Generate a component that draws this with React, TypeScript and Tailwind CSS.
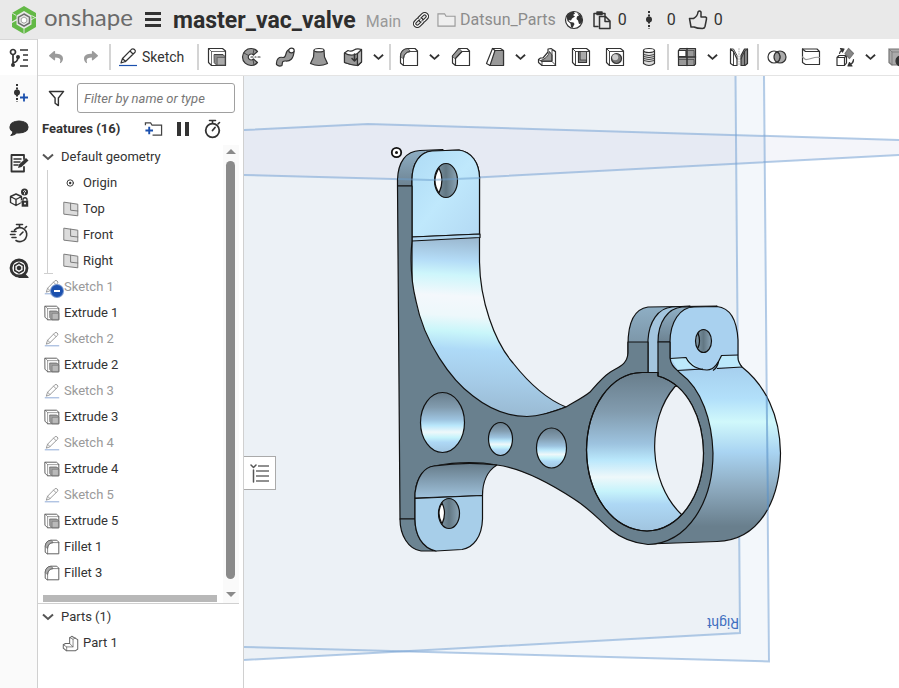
import React from 'react';
import { FaReply, FaShare } from 'react-icons/fa';

type IconProps = { className?: string };

function Svg({ className = 'w-5 h-5', children }: { className?: string; children: React.ReactNode }) {
  return (
    <svg
      viewBox="0 0 20 20"
      className={`shrink-0 ${className}`}
      fill="none"
      stroke="currentColor"
      strokeWidth="1.2"
      strokeLinejoin="round"
      strokeLinecap="round"
      aria-hidden="true"
    >
      {children}
    </svg>
  );
}

/* ---------- Modelling icons ---------- */

const PencilIcon = ({ className }: IconProps) => (
  <Svg className={className}>
    <path d="M3 16 4.5 11.5 13.5 2.3Q15 1.2 16.5 2.5T17 5.3L7.5 14.5Z M4.5 11.5 7.5 14.5 M12 4 15 7" />
    <path d="M1 18.5H19" stroke="#1b50ae" strokeLinecap="butt" />
  </Svg>
);

const ExtrudeIcon = ({ className }: IconProps) => (
  <Svg className={className}>
    <path d="M1.5 1.5H15.5L18.5 4V18.5H4.5L1.5 15.5Z" fill="#fff" />
    <path d="M1.5 1.5 4.5 4.5V18.5M4.5 4.5H18.5" strokeWidth="0.7" />
    <path d="M7.5 7.5H16L18.5 10V18.5H10L7.5 16Z" fill="#8a8a8a" strokeWidth="0.9" />
    <path d="M10.5 10.5H18V18H10.5Z" fill="#aaa" stroke="#555" strokeWidth="0.7" />
  </Svg>
);

const RevolveIcon = () => (
  <Svg>
    <path d="M16.5 4.500A8.500 8.500 0 1 0 16.500 15.500L12.500 12A3 3 0 1 1 12.500 8Z" fill="#999" />
    <path d="M12 7.500 13 2M12 12.500 13 18M7.500 8.500 3 6" strokeWidth="0.8" />
    <path d="M10 10H12M14 10H15M17 10H19" />
  </Svg>
);

const SweepIcon = () => (
  <Svg>
    <path d="M1.500 17.500C1 12 4 9.500 8 10.500C12 11 9.500 4 14 2.500L19 4.500C18.500 12 15 14.500 10.500 14C7 13.800 7.500 15.500 7 18.500Q4 20 1.500 17.500Z" fill="#999" />
    <ellipse cx="16.500" cy="3.500" rx="2.700" ry="2.400" fill="#fff" />
  </Svg>
);

const LoftIcon = () => (
  <Svg>
    <path d="M5 3.500 4.500 10 1.500 16.500Q10 20.500 18.500 16.500L15.500 10 15 3.500Z" fill="#999" />
    <ellipse cx="10" cy="3.200" rx="5" ry="1.700" fill="#fff" />
  </Svg>
);

const ThickenIcon = () => (
  <Svg>
    <path d="M1.500 6 5 3.500Q8 5 11 3T18.500 2.500V15L15 18.500Q8 18 1.500 15.500Z" fill="#fff" />
    <path d="M1.500 6Q8 10 14.500 6.500V18.500Q8 18 1.500 15.500Z" fill="#999" />
    <path d="M14.500 6.500 18.500 2.500V15L14.500 18.500Z" fill="#bbb" />
    <path d="M11.500 7V14M9 11.500 11.500 14 14 11.500" strokeWidth="1.600" />
  </Svg>
);

const FilletIcon = ({ className }: IconProps) => (
  <Svg className={className}>
    <path d="M1.500 16V9Q2 2 9 1.500H16L18.500 4V18.500H4.500Z" fill="#fff" />
    <path d="M1.500 9Q2 2 9 1.500L11.500 4.500Q5 5 4.500 11.500Z" fill="#999" strokeWidth="0.8" />
    <path d="M4.500 18.500V11.500Q5 5 11.500 4.500H18.500" strokeWidth="0.9" />
  </Svg>
);

const ChamferIcon = () => (
  <Svg>
    <path d="M1.500 16V9L8 1.500H16L18.500 4V18.500H4.500Z" fill="#fff" />
    <path d="M1.500 9 8 1.500 11 4.500 4.500 11.500Z" fill="#999" strokeWidth="0.8" />
    <path d="M4.500 18.500V11.500L11 4.500H18.500" />
  </Svg>
);

const DraftIcon = () => (
  <Svg>
    <path d="M1.500 16.500 7.500 1.500H15.500L18.500 3.500V18.500H5Z" fill="#fff" />
    <path d="M5 18.500 10 3.500H18.500V18.500Z" fill="#999" />
    <path d="M7.500 1.500 10 3.500" />
  </Svg>
);

const RibIcon = () => (
  <Svg>
    <path d="M1.500 12.500 3.500 11H6L11 5V2L14 1.500 18.500 4.500V18.500H5L1.500 15.500Z" fill="#fff" />
    <path d="M4 13.500Q11 11 12.500 4.500L15 8V14H5Z" fill="#999" strokeWidth="0.9" />
    <path d="M1.500 12.500 5 14.500V18.500M5 14.500H15V3L18.500 4.500M15 14.500 18.500 18" strokeWidth="0.900" />
  </Svg>
);

const ShellIcon = () => (
  <Svg>
    <path d="M1.500 1.500H15.500L18.500 4V18.500H4.500L1.500 15.500Z" fill="#fff" />
    <path d="M4.500 18.500V4.500L1.500 1.500M4.500 4.500H18.500" strokeWidth="0.900" />
    <path d="M7.500 4.500H15.500V15.500H7.500Z" fill="#888" />
    <path d="M9.500 4.500H15.500V13H9.500Z" fill="#aaa" strokeWidth="0.700" />
  </Svg>
);

const HoleIcon = () => (
  <Svg>
    <path d="M1.500 1.500H15.500L18.500 4V18.500H4.500L1.500 15.500Z" fill="#fff" />
    <path d="M1.500 1.500 4.500 4.500V18.500M4.500 4.500H18.500" strokeWidth="0.900" />
    <circle cx="11.500" cy="11.500" r="5" fill="#777" />
    <circle cx="10.200" cy="10.200" r="3" fill="#ccc" stroke="none" />
  </Svg>
);

const ThreadIcon = () => (
  <Svg>
    <path d="M4.500 3.500V16.500Q10 20.500 15.500 16.500V3.500Z" fill="#ddd" />
    <ellipse cx="10" cy="3.500" rx="5.500" ry="2" fill="#fff" />
    <path d="M4.500 7.500Q10 10 15.500 7.500M4.500 9.500Q10 12 15.500 9.500M4.500 11.500Q10 14 15.500 11.500M4.500 13.500Q10 16 15.500 13.500" strokeWidth="0.900" />
  </Svg>
);

const PatternIcon = () => (
  <Svg>
    <path d="M1.500 3.500 3 1.500H18.500V17L17 18.500H1.500Z" fill="#999" />
    <path d="M1.500 3.500H9V9.500H1.500Z" fill="#fff" />
    <path d="M10 1.500V18.500M1.500 10H18.500" strokeWidth="1.500" />
    <path d="M1.500 12.500H17V18.500M11 3.500H17V9.500" strokeWidth="0.600" />
  </Svg>
);

const MirrorIcon = () => (
  <Svg>
    <path d="M1.500 2 4.500 4.500 8 12V18.500H4.500L1.500 16.500Z" fill="#fff" />
    <path d="M1.500 2H4.500L8 8.500V12M4.500 4.500V18.500" strokeWidth="0.900" />
    <path d="M18.500 2H15.500L12 8.500V18.500H16L18.500 16.500Z" fill="#888" />
    <path d="M18.500 2 15.500 4.500V18.500M15.500 4.500 12 12" strokeWidth="0.900" />
    <path d="M10 1.500V18.500" stroke="#bbb" strokeDasharray="1 1.500" />
  </Svg>
);

const BooleanIcon = () => (
  <Svg>
    <circle cx="13" cy="10" r="6" fill="#aaa" />
    <circle cx="7" cy="10" r="6" fill="#fff" />
    <path d="M10 4.800A6 6 0 0 1 10 15.200A6 6 0 0 1 10 4.800Z" fill="#999" />
  </Svg>
);

const SplitIcon = () => (
  <Svg>
    <path d="M1.500 2H16L18.500 4.500V17.500H4.500L1.500 15.500Z" fill="#fff" />
    <path d="M1.500 2 4.500 4.500H18.500" />
    <path d="M1.500 10 4.500 12.500C8 13 14 9 18.500 10.500" stroke="#999" />
  </Svg>
);

const TransformIcon = () => (
  <Svg>
    <path d="M2 10.500 4 8.500H11.500V16L9.500 18.500H2ZM2 10.500H9.500V18.500M9.500 10.500 11.500 8.500" fill="#fff" />
    <path d="M13.500 1.500 18.500 6.500 14.500 11.500 10 6.500Z" fill="#888" stroke="#777" />
    <path d="M4.500 6.500Q5 4 7 3M5.500 1.500 9 2 7.500 5ZM18.500 12.500Q18.500 16 16 17M17 19H13L14.500 15.500Z" fill="currentColor" />
  </Svg>
);

const DeletePartIcon = () => (
  <Svg>
    <path d="M2 2H18V18H5L2 15.500Z" fill="#aaa" stroke="#777" />
    <path d="M2 2 5 5H18M5 5V18" stroke="#777" strokeWidth="0.800" />
    <circle cx="14" cy="14" r="5" fill="#333" />
  </Svg>
);

const PlaneIcon = ({ className }: IconProps) => (
  <Svg className={className}>
    <path d="M1.500 1.500 18.500 4V18.500L1.500 16.500Z" fill="#dcdcdc" />
    <path d="M9.500 2.800V11.500L18.500 12.500" />
  </Svg>
);

const PartIcon = ({ className }: IconProps) => (
  <Svg className={className}>
    <path d="M1.500 11.500 4 10H9V3.500L11.500 1.500 18.500 5.500V16.500L16 18.500H5L1.500 15.500Z" fill="#fff" />
    <path d="M1.500 11.500 5.500 14V18.500M5.500 14H13V5L9 3M13 5 15.500 3.500M13 14 9 10" strokeWidth="0.900" />
  </Svg>
);

const ChevronIcon = ({ className = 'w-3 h-3' }: IconProps) => (
  <svg viewBox="0 0 12 12" className={className} fill="none" stroke="currentColor" strokeWidth="2" aria-hidden="true">
    <path d="M1 3.500 6 8 11 3.500" />
  </svg>
);

/* ---------- Document and rail icons ---------- */

const LogoIcon = () => (
  <svg viewBox="0 0 24 28" className="w-6 h-7" aria-hidden="true">
    <path d="M12 0 24 7V11L19.500 13V9.500L12 5 4.500 9.500V13L0 15.500V7Z" fill="#63b946" />
    <path d="M0 17 4.500 14.500V18.500L12 23 19.500 18.500V14L24 11.500V21L12 28 0 21Z" fill="#63b946" />
    <path d="M4 9.300 0 7M19.500 9.500 24 12M12 23V28" stroke="#e9e9e9" strokeWidth="0.900" fill="none" />
    <path d="M12 8 17.500 11.200V17L12 20.200 6.500 17V11.200Z" fill="none" stroke="#6d6d6d" strokeWidth="1.500" />
    <path d="M12 11 14.800 12.600V15.700L12 17.300 9.200 15.700V12.600Z" fill="#fff" stroke="#888" strokeWidth="0.800" />
  </svg>
);

const LinkIcon = () => (
  <Svg className="w-4 h-4">
    <g transform="rotate(-45 10 10)" strokeWidth="4.400">
      <path d="M9.500 13.300H3.500A3.300 3.300 0 0 1 3.500 6.700H7.500Q10.500 7 11 10" />
      <path d="M10.500 6.700H16.500A3.300 3.300 0 0 1 16.500 13.300H12.500Q9.500 13 9 10" />
      <g stroke="#fff" strokeWidth="1.500">
        <path d="M9.500 13.300H3.500A3.300 3.300 0 0 1 3.500 6.700H7.500Q10.500 7 11 10" />
        <path d="M10.500 6.700H16.500A3.300 3.300 0 0 1 16.500 13.300H12.500Q9.500 13 9 10" />
      </g>
    </g>
  </Svg>
);

const FolderIcon = () => (
  <svg viewBox="0 0 20 16" className="w-[19px] h-4" fill="#efefef" stroke="#9a9a9a" strokeWidth="1.200" aria-hidden="true">
    <path d="M1 14.500V1.500H8L9.500 4H19V14.500Z" />
  </svg>
);

const GlobeIcon = () => (
  <Svg>
    <circle cx="10" cy="10" r="8.500" fill="#fff" />
    <path d="M2.500 6.500Q5 2 9.500 1.500L11 3.500 9 5 11 6.500 8 8.500 7 10.500 4.500 10 6 12 9.500 12.500 10.500 14 8.500 18 7 17 6.500 13.500 3.500 11Z" fill="currentColor" stroke="none" />
    <path d="M13 3 17 5.500 18.500 10 17.500 13.500 15 14 14 10.500 12.500 9 13 6.500 15 5.500Z" fill="currentColor" stroke="none" />
  </Svg>
);

const CopyIcon = () => (
  <Svg>
    <g strokeWidth="1.500">
      <path d="M6 16.500H2V3.500H4.500M10 3.500H13V5.500" />
      <path d="M5 2H10V4.500H5Z" fill="currentColor" />
      <path d="M7.500 6.500H13.500L18 11V18.500H7.500ZM13 6.500V11.500H18" />
    </g>
  </Svg>
);

const VersionIcon = ({ plus }: { plus?: boolean }) => (
  <Svg>
    <path d="M8 1V19" strokeWidth="2" strokeDasharray="2 1.500" strokeLinecap="butt" />
    <circle cx="8" cy="9.500" r="3" fill="currentColor" stroke="none" />
    {plus && <path d="M15 10.500V18.500M11 14.500H19" stroke="#1b50ae" strokeWidth="1.800" strokeLinecap="butt" />}
  </Svg>
);

const ThumbIcon = () => (
  <Svg>
    <path
      d="M1.500 8.500H5.500Q9.500 6.500 10 2Q11.500 0 13 2V7H17.500Q19 7.500 18.500 9L17 16.500Q16.500 18.500 14.500 18.500Q9 18.500 6 17H3Z"
      strokeWidth="1.500"
    />
  </Svg>
);

const FeatureTreeIcon = () => (
  <Svg>
    <g strokeWidth="1.700">
      <circle cx="4" cy="4" r="2.500" />
      <path d="M4 6.500V18M4 14.500Q8.500 14.500 9 9.500M11 2H19M14 7H19M14 12H19M11 18H19" strokeLinecap="butt" />
    </g>
    <circle cx="4" cy="17" r="2" fill="currentColor" stroke="none" />
    <circle cx="9" cy="9" r="2" fill="currentColor" stroke="none" />
  </Svg>
);

const CommentIcon = () => (
  <Svg>
    <path d="M10 3C15.500 3 19 5.500 19 9S15.500 15 10 15Q8.500 15 7.500 14.800 5 17.500 2 17.500 4 16 4 13.500 1 12 1 9C1 5.500 4.500 3 10 3Z" fill="currentColor" />
  </Svg>
);

const NotesIcon = () => (
  <Svg>
    <path d="M15 6V2H2.500V18.500H15V14" strokeWidth="1.800" />
    <path d="M5 6H12M5 9H11M5 12H9" strokeWidth="1.500" />
    <path d="M9 15 10 11.500 17 5 19.500 7.500 12.500 14Z" fill="currentColor" stroke="none" />
  </Svg>
);

const PartLockIcon = () => (
  <Svg>
    <path d="M7 6 12.500 8.500V14.500L7 17.500 1.500 14.500V8.500ZM1.500 8.500 7 11.500 12.500 8.500M7 11.500V17.500" strokeWidth="1.400" />
    <circle cx="15.500" cy="4" r="3.500" fill="currentColor" stroke="none" />
    <path d="M14.300 3.500Q15.500 1.500 16.700 3.200 16.500 4.200 15.500 4.700V6" stroke="#fff" strokeWidth="0.900" />
    <path d="M12.500 12.500H19.500V19H12.500Z" fill="currentColor" stroke="#fafafa" strokeWidth="0.600" />
    <path d="M14 12.500V11Q16 8.500 18 11V12.500" strokeWidth="1.300" />
    <circle cx="16" cy="15.500" r="1" fill="#fff" stroke="none" />
  </Svg>
);

const TimerIcon = ({ lines }: { lines?: boolean }) => (
  <Svg>
    <path d="M7.500 1.500H13.500M10.500 1.500V4M16 5 17.500 3.500" strokeWidth="1.600" />
    {lines ? (
      <path d="M5.500 7A7 7 0 1 1 7 17.500M2.500 8.500H7M1.500 11.500H6M3 14.500H7M11 12 14 9" strokeWidth="1.600" />
    ) : (
      <>
        <circle cx="10.500" cy="11.500" r="6.800" strokeWidth="1.800" />
        <path d="M10.500 11.500 13 8.500" strokeWidth="1.800" />
      </>
    )}
  </Svg>
);

const LearnIcon = () => (
  <Svg>
    <path d="M16 16.500 19 19.500H10" fill="currentColor" />
    <circle cx="10" cy="10" r="8" strokeWidth="2.800" fill="#fff" />
    <path d="M10 5 14.300 7.500V12.500L10 15 5.700 12.500V7.500Z" strokeWidth="1.500" />
    <path d="M10 7.500 12.200 8.800V11.300L10 12.500 7.800 11.300V8.800Z" fill="currentColor" stroke="none" />
  </Svg>
);

/* ---------- Data ---------- */

type Tool = { name: string; icon: React.ComponentType; menu?: boolean; end?: boolean };

const tools: Tool[] = [
  { name: 'Extrude', icon: ExtrudeIcon },
  { name: 'Revolve', icon: RevolveIcon },
  { name: 'Sweep', icon: SweepIcon },
  { name: 'Loft', icon: LoftIcon },
  { name: 'Thicken', icon: ThickenIcon, menu: true, end: true },
  { name: 'Fillet', icon: FilletIcon, menu: true },
  { name: 'Chamfer', icon: ChamferIcon },
  { name: 'Draft', icon: DraftIcon, menu: true },
  { name: 'Rib', icon: RibIcon },
  { name: 'Shell', icon: ShellIcon },
  { name: 'Hole', icon: HoleIcon },
  { name: 'Thread', icon: ThreadIcon, end: true },
  { name: 'Pattern', icon: PatternIcon, menu: true },
  { name: 'Mirror', icon: MirrorIcon, end: true },
  { name: 'Boolean', icon: BooleanIcon },
  { name: 'Split', icon: SplitIcon },
  { name: 'Transform', icon: TransformIcon, menu: true },
  { name: 'Delete part', icon: DeletePartIcon },
];

const features = [
  { name: 'Sketch 1', type: 'sketch', flagged: true },
  { name: 'Extrude 1', type: 'extrude' },
  { name: 'Sketch 2', type: 'sketch' },
  { name: 'Extrude 2', type: 'extrude' },
  { name: 'Sketch 3', type: 'sketch' },
  { name: 'Extrude 3', type: 'extrude' },
  { name: 'Sketch 4', type: 'sketch' },
  { name: 'Extrude 4', type: 'extrude' },
  { name: 'Sketch 5', type: 'sketch' },
  { name: 'Extrude 5', type: 'extrude' },
  { name: 'Fillet 1', type: 'fillet' },
  { name: 'Fillet 3', type: 'fillet' },
];

const railItems = [
  { name: 'Versions', icon: <VersionIcon plus /> },
  { name: 'Comments', icon: <CommentIcon /> },
  { name: 'Notes', icon: <NotesIcon /> },
  { name: 'Part properties', icon: <PartLockIcon /> },
  { name: 'Performance', icon: <TimerIcon lines /> },
  { name: 'Learning', icon: <LearnIcon /> },
];

const Separator = () => <div className="w-0.5 h-[26px] mx-px shrink-0 bg-[#d4d4d4]" />;

/* ---------- Header ---------- */

function Header() {
  return (
    <header className="flex items-center h-[39px] shrink-0 pl-3 bg-[#e9e9e9] whitespace-nowrap overflow-hidden">
      <a href="#home" aria-label="onshape" className="flex items-center gap-2 w-[133px] shrink-0">
        <LogoIcon />
        <span className="font-[Lato,sans-serif] text-[24px] leading-7 text-[#6b6b6b] pb-1.5">onshape</span>
      </a>
      <button aria-label="Main menu" className="flex flex-col justify-between w-4 h-[15px] shrink-0">
        <span className="w-full h-[3px] bg-[#333]" />
        <span className="w-full h-[3px] bg-[#333]" />
        <span className="w-full h-[3px] bg-[#333]" />
      </button>
      <h1 className="ml-3 pt-0.5 text-[23px] leading-7 font-bold text-[#2e2e2e]">master_vac_valve</h1>
      <span className="ml-2.5 pt-1 text-base text-[#999]">Main</span>
      <button aria-label="Copy link" className="ml-3"><LinkIcon /></button>
      <a href="#folder" className="flex items-center gap-1 ml-2 text-base text-[#8c8c8c]">
        <FolderIcon />
        Datsun_Parts
      </a>
      <button aria-label="Public document" className="ml-2"><GlobeIcon /></button>
      <button aria-label="Copies" className="flex items-center gap-1.5 ml-2 text-base"><CopyIcon />0</button>
      <button aria-label="Versions" className="flex items-center gap-1.5 ml-3.5 text-base"><VersionIcon />0</button>
      <button aria-label="Likes" className="flex items-center gap-1.5 ml-3 text-base"><ThumbIcon />0</button>
    </header>
  );
}

function Toolbar() {
  return (
    <div role="toolbar" aria-label="Features" className="flex items-center h-[37px] shrink-0 overflow-hidden border-b border-[#e4e4e4] bg-white">
      <button aria-label="Undo" className="flex justify-center w-[35px] shrink-0 text-[#9b9b9b]"><FaReply size={14} /></button>
      <button aria-label="Redo" className="flex justify-center w-[35px] shrink-0 text-[#9b9b9b]"><FaShare size={14} /></button>
      <Separator />
      <button className="flex items-center gap-1 w-[84px] shrink-0 pl-1.5 text-sm">
        <PencilIcon />
        Sketch
      </button>
      <Separator />
      {tools.map(({ name, icon: Icon, menu, end }) => (
        <React.Fragment key={name}>
          <button aria-label={name} className="flex justify-center w-[34px] shrink-0"><Icon /></button>
          {menu && (
            <button aria-label={`${name} menu`} className="flex justify-center w-[18px] shrink-0 pr-0.5">
              <ChevronIcon className="w-[11px] h-3" />
            </button>
          )}
          {end && <Separator />}
        </React.Fragment>
      ))}
    </div>
  );
}

/* ---------- Feature panel ---------- */

function FeatureIcon({ type }: { type: string }) {
  if (type === 'sketch') return <PencilIcon className="w-4 h-4 text-[#333] opacity-50" />;
  if (type === 'extrude') return <ExtrudeIcon className="w-4 h-4 opacity-80" />;
  return <FilletIcon className="w-4 h-4 opacity-80" />;
}

function FeaturePanel() {
  return (
    <aside className="flex flex-col w-[206px] shrink-0 border-r border-[#d0d0d0] bg-white text-[13px]">
      <div className="flex items-center h-10 shrink-0 pt-1 pr-2 gap-3 pl-2.5">
        <button aria-label="Filter options">
          <svg viewBox="0 0 18 18" className="w-[17px] h-[17px]" fill="none" stroke="#333" strokeWidth="1.500" strokeLinejoin="round" aria-hidden="true">
            <path d="M1.500 1.500H16.500L11 8.500V16.500L7.500 14V8.500Z" />
          </svg>
        </button>
        <input
          aria-label="Filter by name or type"
          placeholder="Filter by name or type"
          className="w-full min-w-0 h-[30px] px-1.5 border border-[#a0a0a0] rounded-[3px] italic placeholder:text-[#777]"
        />
      </div>

      <div className="flex items-center h-[26px] shrink-0 pl-1">
        <h2 className="w-[102px] font-bold">Features (16)</h2>
        <button aria-label="Add folder" className="w-[30px]">
          <svg viewBox="0 0 20 16" className="w-[19px] h-4" fill="none" stroke="#444" strokeWidth="1.300" aria-hidden="true">
            <path d="M1.500 4V1.500H7L8.500 4H18.500V14.500H9" />
            <path d="M5.500 5.500V13.500M1.500 9.500H9.500" stroke="#1b50ae" strokeWidth="2" />
          </svg>
        </button>
        <button aria-label="Suspend regeneration" className="flex gap-1 w-7 pl-[3px]">
          <span className="w-1 h-3.5 bg-[#333]" />
          <span className="w-1 h-3.5 bg-[#333]" />
        </button>
        <button aria-label="Regeneration times"><TimerIcon /></button>
      </div>

      <div className="flex shrink-0 border-b border-[#d0d0d0] mr-1 pt-0.5">
        <div className="flex-1 min-w-0">
          <button className="flex items-center gap-[7px] h-[26px] pl-1">
            <ChevronIcon className="w-3 h-3 text-[#555]" />
            Default geometry
          </button>
          <ul className="relative ml-[9px] border-l border-[#cfcfcf] pl-[15px]">
            <li className="flex items-center gap-1 h-[26px]">
              <Svg className="w-4 h-4">
                <circle cx="9" cy="10" r="4" />
                <circle cx="9" cy="10" r="1.500" fill="currentColor" stroke="none" />
              </Svg>
              Origin
            </li>
            {['Top', 'Front', 'Right'].map((plane) => (
              <li key={plane} className="flex items-center gap-1 h-[26px]">
                <PlaneIcon className="w-4 h-4 text-[#777]" />
                {plane}
              </li>
            ))}
            <li aria-hidden="true" className="absolute bottom-0 -left-1 w-[9px] h-px bg-[#cfcfcf]" />
          </ul>
          <ul>
            {features.map((feature) => (
              <li
                key={feature.name}
                className={`relative flex items-center gap-1 h-[26px] pl-1.5 ${feature.type === 'sketch' ? 'text-[#9a9a9a]' : ''}`}
              >
                <FeatureIcon type={feature.type} />
                {feature.name}
                {feature.flagged && (
                  <span className="absolute left-3 bottom-0.5 flex items-center justify-center w-3.5 h-3.5 rounded-full bg-[#1b50ae] border border-white/40">
                    <span className="w-1.5 h-0.5 bg-white" />
                  </span>
                )}
              </li>
            ))}
          </ul>
          <div className="mt-[9px] mb-px ml-[5px] mr-1.5 h-[7px] bg-[#b8b8b8]" />
        </div>
        {/* Vertical scrollbar */}
        <div className="flex flex-col items-center w-4 pr-px mt-px pt-1 pb-1.5 bg-[#fafafa]">
          <div className="border-x-[5px] border-x-transparent border-b-[5px] border-b-[#8a8a8a]" />
          <div className="flex-1 w-[9px] mt-[7px] mb-[13px] rounded-full bg-[#8a8a8a]" />
          <div className="border-x-[5px] border-x-transparent border-t-[5px] border-t-[#8a8a8a]" />
        </div>
      </div>

      <button className="flex items-center gap-[7px] h-[26px] pl-1">
        <ChevronIcon className="w-3 h-3 text-[#555]" />
        Parts (1)
      </button>
      <div className="flex items-center gap-1 h-[26px] pl-6">
        <PartIcon className="w-[17px] h-[17px] text-[#666]" />
        Part 1
      </div>
    </aside>
  );
}

/* ---------- Graphics area ---------- */

function Viewport() {
  return (
    <svg viewBox="244 76 655 612" preserveAspectRatio="xMinYMin slice" className="block w-full h-full" role="img" aria-label="Bracket model">
      <defs>
        <linearGradient id="arm" gradientUnits="userSpaceOnUse" x1="445" y1="239" x2="435" y2="415">
          <stop offset="0" stopColor="#9dbbd3" />
          <stop offset="0.120" stopColor="#b4dcf7" />
          <stop offset="0.200" stopColor="#cdf6fb" />
          <stop offset="0.320" stopColor="#f4f8fc" />
          <stop offset="0.430" stopColor="#edf8fb" />
          <stop offset="0.520" stopColor="#c9f6fa" />
          <stop offset="0.620" stopColor="#aedaf7" />
          <stop offset="0.800" stopColor="#a5cbe7" />
          <stop offset="1" stopColor="#98b8d0" />
        </linearGradient>
        <linearGradient id="bore" x1="0" y1="0" x2="0" y2="1">
          <stop offset="0" stopColor="#687d8b" />
          <stop offset="0.250" stopColor="#829caf" />
          <stop offset="0.450" stopColor="#9dc3df" />
          <stop offset="0.550" stopColor="#b9e7fb" />
          <stop offset="0.660" stopColor="#eef8fa" />
          <stop offset="0.750" stopColor="#c6f3fb" />
          <stop offset="0.830" stopColor="#aed8f5" />
          <stop offset="1" stopColor="#a0c4df" />
        </linearGradient>
        <linearGradient id="outer" gradientUnits="userSpaceOnUse" x1="0" y1="367" x2="0" y2="544">
          <stop offset="0" stopColor="#a6cfee" />
          <stop offset="0.180" stopColor="#b2e0fa" />
          <stop offset="0.310" stopColor="#d0f8fb" />
          <stop offset="0.480" stopColor="#a9d4f2" />
          <stop offset="0.680" stopColor="#8eabc0" />
          <stop offset="0.900" stopColor="#697f8d" />
          <stop offset="1" stopColor="#697f8d" />
        </linearGradient>
        <linearGradient id="tab" x1="0" y1="0" x2="1" y2="1">
          <stop offset="0" stopColor="#aedbf5" />
          <stop offset="0.500" stopColor="#bfe8fc" />
          <stop offset="1" stopColor="#b3d9f3" />
        </linearGradient>
        <linearGradient id="side" x1="0" y1="0" x2="0" y2="1">
          <stop offset="0" stopColor="#8fafc5" />
          <stop offset="1" stopColor="#6d8392" />
        </linearGradient>
        <linearGradient id="hook" x1="0" y1="0" x2="0" y2="1">
          <stop offset="0" stopColor="#667b89" />
          <stop offset="1" stopColor="#a0c3dd" />
        </linearGradient>
        <linearGradient id="pin" x1="0" y1="0" x2="1" y2="0">
          <stop offset="0" stopColor="#829bab" />
          <stop offset="0.500" stopColor="#627783" />
          <stop offset="1" stopColor="#8ba5b6" />
        </linearGradient>
        <clipPath id="bore-clip">
          <path d="M658 376C689 385 703 420 703.500 453C703 497 679 530 647 531C611 530 587 493 586.500 450C587 408 610 373 642 372.500H658Z" />
        </clipPath>
      </defs>

      {/* Default planes */}
      <rect x="244" y="76" width="655" height="612" fill="#fff" />
      <path d="M244 76H764L769 661.500 244 647Z" fill="#f3f7fb" />
      <path d="M244 76H735.500L740 633 244 660Z" fill="#ecf1f6" />
      <path d="M244 130 368 124 899 140V155L430 180 244 175Z" fill="#d3d8ea" fillOpacity="0.250" />
      <g fill="none" stroke="#76a3d3" strokeOpacity="0.550" strokeWidth="2">
        <path d="M764 76 769 661.500 244 647" />
        <path d="M735.500 76 740 633 244 660" />
        <path d="M244 130 368 124 899 140M244 175 430 180 899 155" />
      </g>
      <text transform="translate(739 618) rotate(180)" className="font-[Roboto,sans-serif] text-[14px]" fill="#3f6fc0">Right</text>

      <g stroke="#111" strokeWidth="1.200" strokeLinejoin="round">
        {/* Clamp cylinder */}
        <path
          d="M648 544 717 541.500C760 540 780 500 780.500 453C780 415 765 385 742 367C739 364 738 361 738 358L670 340V360L690 460Z"
          fill="url(#outer)"
        />
        {/* Left clamp ear and slot */}
        <path d="M628 345C628 324 634 309 648 307L717 306 690 315 672 372 628 372Z" fill="url(#side)" />
        <path d="M648 373V340C649 322 658 308 672 307L690 306 660 340V373Z" fill="#a3c5de" />
        <path d="M658 342C658 322 668 308 682 307H717L671 342Z" fill="url(#side)" />
        {/* Right clamp ear */}
        <path d="M670 358V342C670 322 680 307 694 307L717 306.500C731 308 737 322 738 340V361L741.500 367 679 371Q671 365 670 358Z" fill="#a9d1ef" stroke="none" />
        <path d="M671 358H687L697 367 678 370Z" fill="#bce9fb" stroke="none" />
        <path d="M721 356H738L741 367H717Z" fill="#bce9fb" stroke="none" />
        <path d="M670 358V342C670 322 680 307 694 307L717 306.500C731 308 737 322 738 340V358Q738 362 742 367" fill="none" />
        <path d="M670 358.500 686 357.500C690 366 699 370 707 370C715 370 719 361 721.500 355.500L738 355" fill="none" />
        <path d="M677 370.500 703 369M717 368.500 742 367M718.500 362Q717 368 713 370.500" fill="none" />
        <ellipse cx="703.500" cy="341" rx="8" ry="11.500" fill="url(#pin)" />
        <path d="M698 333Q701 341 698 348" fill="none" />

        {/* Top edge of side wall */}
        <path d="M397.500 186V180C398 162 406 151 420 150.500L443 149.500 430 156 412 186Z" fill="url(#side)" />

        {/* Upper arm, inner curved surface */}
        <path
          d="M412 180C412 163 420 152 432 151L459 150C472 152 479 163 479.500 177V262C480 300 494 341 513 363C528 382 546 399 566 407L527 420H450L412 360Z"
          fill="url(#arm)"
        />
        <path d="M412 180C412 163 420 152 432 151L459 150C472 152 479 163 479.500 177V234L412 237Z" fill="url(#tab)" />
        <path d="M412 237 480 234V237.500L412 241Z" fill="#b0d6f0" />

        {/* Front face */}
        <path
          d="M397.500 186H412V241C410 262 412 285 416 301C424 342 451 380 473 396C492 411 512 416.500 527 416.500C542 416 556 411 566 407C576 401 584 397 590 392C598 383 603 377 609 373C617 367 627 366 628 353V342H648V373H658V342H670V358C671 366 675 368 680 373C702 389 712 421 713 453C713 502 688 543 648 544.500C632 543 621 538 611 530C599 520 590 509 574 499C548 482 520 468 497 465C475 461 450 463 434 466C421 469 415 482 415 497V519L400 519Z"
          fill="#69808e"
        />
        <path d="M400 519H415C415 534 422 548 436 551H421C408 549 400 535 400 519Z" fill="#6c8492" />

        {/* Lower tab */}
        <path d="M415 498V493C417 477 424 467 434 466C455 463 480 463 497 465C487 471 482.500 483 482.500 495.500Z" fill="url(#hook)" />
        <path d="M415 498.500 482.500 495.500V519C482 537 473 548 462 549.500L436 551C422 548 415 535 415 519Z" fill="#a7cee9" />

        {/* Holes */}
        <ellipse cx="446" cy="180.500" rx="11.500" ry="17" fill="url(#pin)" />
        <path d="M439 168Q431 181 439 193Q445 180 439 168Z" fill="#fff" />
        <ellipse cx="449" cy="513.500" rx="10.500" ry="15" fill="url(#pin)" />
        <path d="M442 503Q436 513 442 524Q447 513 442 503Z" fill="#fff" />
        <ellipse cx="442.500" cy="422.500" rx="22" ry="30" fill="url(#bore)" />
        <ellipse cx="500.500" cy="439" rx="12" ry="16.500" fill="url(#bore)" />
        <ellipse cx="551.500" cy="448" rx="15" ry="20" fill="url(#bore)" />

        {/* Clamp bore, with the far opening clipped by the near edge */}
        <path d="M658 376C689 385 703 420 703.500 453C703 497 679 530 647 531C611 530 587 493 586.500 450C587 408 610 373 642 372.500H658Z" fill="url(#bore)" />
        <g clipPath="url(#bore-clip)">
          <path d="M675 386.500C646 420 648 482 681 514L730 520V380Z" fill="#ecf1f6" />
        </g>
        <path d="M658 376C689 385 703 420 703.500 453C703 497 679 530 647 531C611 530 587 493 586.500 450C587 408 610 373 642 372.500H658Z" fill="none" />
      </g>

      {/* Plane edges in front of the part */}
      <path d="M398 179 430 180 480 178" fill="none" stroke="#6b9dcc" strokeOpacity="0.500" strokeWidth="2" />
      <path d="M766.700 396 768 510" fill="none" stroke="#5b93c8" strokeOpacity="0.600" strokeWidth="2" />

      {/* Origin marker */}
      <circle cx="396.500" cy="152.500" r="4.700" fill="#fff" stroke="#111" strokeWidth="1.800" />
      <circle cx="396.500" cy="152.500" r="1.500" fill="#111" />
    </svg>
  );
}

export default function App() {
  return (
    <div className="flex flex-col h-screen overflow-hidden bg-white font-[Roboto,sans-serif] text-[#333]">
      <Header />
      <div className="flex flex-1 min-h-0">
        <nav aria-label="Panels" className="flex flex-col w-[38px] shrink-0 border-r border-[#d0d0d0] bg-[#fafafa]">
          <button aria-label="Feature list" className="flex items-center justify-center h-9 bg-white border-t border-[#d8d8d8]">
            <FeatureTreeIcon />
          </button>
          {railItems.map((item) => (
            <button key={item.name} aria-label={item.name} className="flex items-center justify-center h-[35px]">
              {item.icon}
            </button>
          ))}
        </nav>
        <div className="flex flex-col flex-1 min-w-0">
          <Toolbar />
          <div className="flex flex-1 min-h-0">
            <FeaturePanel />
            <main className="relative flex-1 min-w-0 overflow-hidden">
              <Viewport />
              <button aria-label="Toggle feature list" className="absolute left-0 top-[380px] flex items-center justify-center w-8 h-[34px] bg-white border border-l-0 border-[#aaa]">
                <Svg>
                  <path d="M1 2 3.500 4.500 6 2M3.500 7V19" stroke="#555" strokeWidth="1.500" />
                  <path d="M8 3H19M6 8H19M6 13H19M6 18H19" stroke="#222" strokeLinecap="butt" />
                </Svg>
              </button>
            </main>
          </div>
        </div>
      </div>
    </div>
  );
}
